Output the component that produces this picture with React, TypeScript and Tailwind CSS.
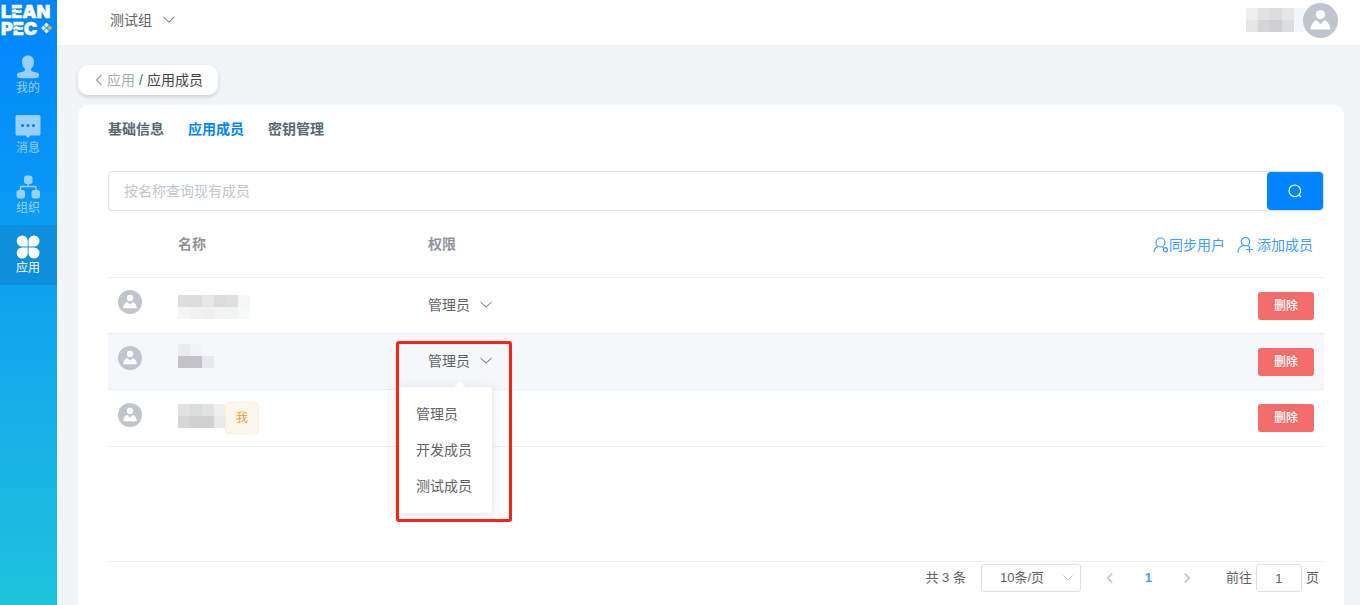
import { useState } from "react";
import type { ReactNode } from "react";
import clsx from "clsx";

type Member = {
    id: number;
    mask: string[][];
    maskClass: string;
    role: string;
    isMe?: boolean;
};

const roles = ["管理员", "开发成员", "测试成员"];

const members: Member[] = [
    {
        id: 1,
        mask: [
            ["#dcdddf", "#dcdddf", "#e7e7e7", "#dcdcdc", "#dee0df", "#f5f7f6"],
            ["#f5f5f5", "#f2f2f2", "#f0f0f0", "#f3f3f3", "#f2f4f3", "#f7f8f8"],
        ],
        maskClass: "mt-1",
        role: "管理员",
    },
    {
        id: 2,
        mask: [
            ["#ebecf0", "#f2f3f8", "#f5f7fb"],
            ["#c3c3c7", "#c3c3c7", "#e7e8ed"],
        ],
        maskClass: "mb-2.5",
        role: "管理员",
    },
    {
        id: 3,
        mask: [
            ["#e2e2e2", "#dbdcde", "#e1e3e2", "#f0eeee"],
            ["#d6d6d6", "#d1d1d1", "#d1d1d1", "#e9e9e9"],
        ],
        maskClass: "mb-1 -mr-px",
        role: "管理员",
        isMe: true,
    },
];

const userMask = [
    ["#eeeeed", "#e0e1e3", "#dcdcdd", "#e4e5e7", "#f5f6f7"],
    ["#e6e6e6", "#d4d5d7", "#d0cfd2", "#dcdddf", "#f5f6f7"],
];

function Logo() {
    return (
        <svg viewBox="0 0 57 45" className="h-[45px] w-full" role="img" aria-label="LEAN PEC">
            <g fill="#fff" stroke="#fff" strokeWidth=".5" fontFamily="Inter, sans-serif" fontWeight="900" fontSize="18">
                <text x="1" y="18">LEAN</text>
                <text x="1" y="35">PEC</text>
            </g>
            <g stroke="#0084ff" strokeWidth=".9" fill="none">
                <path d="M11 9.500q4-1.500 6 0t6-1M11 13.500q4-1.500 6 0t6-1" />
                <path d="M13 26.500q4-1.500 6 0t5-1M13 30.500q4-1.500 6 0t5-1" />
            </g>
            <path d="M46.500 22.500l2.500 2.500-2.500 2.500-2.500-2.500zM43.500 25.500l2.500 2.500-2.500 2.500-2.500-2.500zM46.500 28.500l2.500 2.500-2.500 2.500-2.500-2.500z" fill="#d9edff" />
            <path d="M49.700 25.300l2.500 2.600-2.500 2.600-2.500-2.600z" fill="#f0a73a" />
        </svg>
    );
}

const navItems: { label: string; icon: ReactNode }[] = [
    {
        label: "我的",
        icon: (
            <path d="M12 .5c3.600 0 6 2.600 6 6.500 0 2.900-1.200 5.300-2.800 6.700v1.500c0 .7.500 1.100 1.300 1.300l4.300 1.100c1.500.4 2.300 1.300 2.300 2.700 0 1.600-.8 2.500-2.500 2.600-5 .5-12.200.5-17.200 0C1.700 22.800.9 21.900.9 20.300c0-1.400.8-2.300 2.300-2.700l4.300-1.100c.8-.2 1.300-.6 1.300-1.300v-1.500C7.200 12.300 6 9.900 6 7 6 3.100 8.400.5 12 .5z" />
        ),
    },
    {
        label: "消息",
        icon: (
            <>
                <path d="M1 0h22a1.500 1.500 0 0 1 1.500 1.500v17.500a1.500 1.500 0 0 1-1.500 1.500h-8.500L12 23l-2.500-2.500H1A1.500 1.500 0 0 1-.5 19V1.500A1.500 1.500 0 0 1 1 0z" />
                <g fill="#0587fd">
                    <circle cx="6.500" cy="10.500" r="1.600" />
                    <circle cx="12" cy="10.500" r="1.600" />
                    <circle cx="17.500" cy="10.500" r="1.600" />
                </g>
            </>
        ),
    },
    {
        label: "组织",
        icon: (
            <>
                <rect x="8" y=".5" width="8.500" height="8.500" rx="2.500" />
                <rect x=".5" y="15" width="8.500" height="8.500" rx="2.500" />
                <rect x="15.500" y="15" width="8.500" height="8.500" rx="2.500" />
                <path d="M12.200 8v3.500M4.500 15.500v-3q0-1 1-1h13.500q1 0 1 1v3" fill="none" stroke="currentColor" strokeWidth="1.400" />
            </>
        ),
    },
    {
        label: "应用",
        icon: (
            <>
                <path d="M6.200.5a5.500 5.500 0 0 1 5.500 5.500v5.500H6.200a5.500 5.500 0 0 1 0-11z" />
                <path d="M18 .5a5.500 5.500 0 0 1 0 11h-5.500V6A5.500 5.500 0 0 1 18 .5z" />
                <path d="M6.200 12.500h5.500V18a5.500 5.500 0 1 1-5.500-5.500z" />
                <path d="M12.500 12.500H18a5.500 5.500 0 1 1-5.500 5.500z" />
            </>
        ),
    },
];

function Chevron({ className, dir = "down" }: { className?: string; dir?: "down" | "left" | "right" }) {
    const d = {
        down: "M1.500 4l5.500 5.200L12.500 4",
        left: "M9.500 2L4.500 7l5 5",
        right: "M4.500 2l5 5-5 5",
    }[dir];
    return (
        <svg viewBox="0 0 14 14" className={clsx("shrink-0", className)} fill="none" stroke="currentColor" aria-hidden="true">
            <path d={d} />
        </svg>
    );
}

function Avatar({ className }: { className: string }) {
    return (
        <svg viewBox="0 0 35 35" className={clsx("block shrink-0", className)} aria-hidden="true">
            <circle cx="17.500" cy="17.500" r="17.500" fill="#c0c4cc" />
            <circle cx="17.500" cy="11.500" r="4.600" fill="#fff" />
            <path d="M7.500 26.500c.5-4.500 2.500-8 6-9.300l4 4.300 4-4.300c3.500 1.300 5.500 4.800 6 9.300z" fill="#fff" />
        </svg>
    );
}

function Mosaic({ rows, className }: { rows: string[][]; className?: string }) {
    return (
        <div aria-hidden="true" className={clsx("shrink-0", className)}>
            {rows.map((row, i) => (
                <div key={i} className="flex">
                    {row.map((color, j) => (
                        <span key={j} className="size-3" style={{ backgroundColor: color }} />
                    ))}
                </div>
            ))}
        </div>
    );
}

function RoleCell({ role, open, onToggle, onPick }: { role: string; open: boolean; onToggle: () => void; onPick: (r: string) => void }) {
    return (
        <div className="relative inline-flex align-middle">
            <button type="button" className="flex h-5 items-center gap-[9px] text-[#606266]" aria-expanded={open} onClick={onToggle}>
                {role}
                <Chevron className="size-3.5" />
            </button>
            {open && (
                <>
                    <div className="absolute -left-8 top-[35px] z-10 w-[97px] rounded border border-[#ebeef5] bg-white py-[9px] shadow-[0_2px_12px_rgba(0,0,0,0.1)]">
                        <span className="absolute -top-1 left-[59px] size-2 rotate-45 bg-white" />
                        {roles.map((r) => (
                            <button key={r} type="button" className="block h-9 w-full px-[19px] text-left text-[#606266]" onClick={() => onPick(r)}>
                                {r}
                            </button>
                        ))}
                    </div>
                    <div className="pointer-events-none absolute -left-8 -top-2.5 z-20 h-[181px] w-[116px] rounded-[3px] border-3 border-[#fa2318]" />
                </>
            )}
        </div>
    );
}

export default function App() {
    const [list, setList] = useState(members);
    const [openId, setOpenId] = useState<number | null>(2);

    const pickRole = (id: number, role: string) => {
        setList(list.map((m) => (m.id === id ? { ...m, role } : m)));
        setOpenId(null);
    };

    return (
        <div className="flex min-h-screen bg-[#f1f5f8] font-['Liberation_Sans','Noto_Sans_CJK_SC',sans-serif] text-sm text-[#606266]">
            <aside className="w-[57px] shrink-0 bg-linear-to-b/srgb from-[#0084ff] to-[#1fc3dd]">
                <Logo />
                <nav>
                    {navItems.map((item) => (
                        <a
                            key={item.label}
                            href="#"
                            className={clsx(
                                "flex h-[60px] flex-col items-center gap-px pr-px pt-2.5 text-xs/4",
                                item.label === "应用" ? "bg-[#0f8fdb] text-white" : "text-[#99d0ff]"
                            )}
                        >
                            <svg viewBox="0 0 24 24" className="size-6 overflow-visible" fill="currentColor" aria-hidden="true">
                                {item.icon}
                            </svg>
                            {item.label}
                        </a>
                    ))}
                </nav>
            </aside>

            <div className="flex min-w-0 flex-1 flex-col">
                <header className="flex h-[45px] items-center justify-between bg-white pb-[5px] pl-[53px] pr-[22px]">
                    <button type="button" className="flex items-center gap-2.5">
                        测试组
                        <Chevron className="size-3.5" />
                    </button>
                    <div className="flex items-center">
                        <Mosaic rows={userMask} className="-mr-[3px]" />
                        <Avatar className="size-[35px]" />
                    </div>
                </header>

                <main className="flex flex-1 flex-col pl-[21px] pr-4 pt-5">
                    <div className="mb-2.5 flex h-[30px] items-center self-start rounded-[10px] bg-white pl-3.5 pr-[15px] shadow-[0_2px_4px_rgba(0,0,0,0.15)]">
                        <Chevron dir="left" className="mr-px size-3.5" />
                        <a href="#" className="text-[#a5adb8]">应用</a>
                        <span className="px-1">/</span>
                        <span className="text-[#404248]">应用成员</span>
                    </div>

                    <section className="flex flex-1 flex-col rounded-t-[10px] bg-white pb-[13px] pl-[30px] pr-5 pt-3.5">
                        <nav className="mb-8 flex gap-6 font-bold text-[#5a6670]">
                            <a href="#">基础信息</a>
                            <a href="#" className="text-[#0084ff]">应用成员</a>
                            <a href="#">密钥管理</a>
                        </nav>

                        <form className="flex h-10 rounded border border-[#dcdfe6]" onSubmit={(e) => e.preventDefault()}>
                            <input
                                type="text"
                                aria-label="按名称查询现有成员"
                                placeholder="按名称查询现有成员"
                                className="min-w-0 flex-1 px-[15px] outline-none placeholder:text-[#c0c4cc]"
                            />
                            <button type="submit" aria-label="搜索" className="flex w-14 items-center justify-center rounded bg-[#0084ff] text-white">
                                <svg viewBox="0 0 14 14" className="size-3.5" fill="none" stroke="currentColor" strokeWidth="1.200" aria-hidden="true">
                                    <circle cx="6.800" cy="6.800" r="5.800" />
                                    <path d="M10.800 10.800l2.200 2.200" />
                                </svg>
                            </button>
                        </form>

                        <table className="w-full table-fixed border-collapse text-left">
                            <colgroup>
                                <col className="w-[60px]" />
                                <col className="w-[250px]" />
                                <col />
                                <col className="w-[250px]" />
                            </colgroup>
                            <thead>
                                <tr className="h-[66px] border-b border-[#ebeef5] text-[#909399]">
                                    <th aria-label="头像" />
                                    <th className="px-2.5">名称</th>
                                    <th className="px-2.5">权限</th>
                                    <th className="pr-[11px] pt-0.5 font-normal">
                                        <div className="flex justify-end gap-3 text-[#409eff]">
                                            <button type="button" className="flex items-center">
                                                <svg viewBox="0 0 16 16" className="size-4" fill="none" stroke="currentColor" strokeWidth="1.200" aria-hidden="true">
                                                    <circle cx="7.500" cy="5.500" r="4.500" />
                                                    <path d="M1 15c.3-3 1.800-4.800 4.500-5.500M9 9.700l1.500.8" />
                                                    <circle cx="12.500" cy="12.800" r="2.100" />
                                                </svg>
                                                同步用户
                                            </button>
                                            <button type="button" className="flex items-center gap-1">
                                                <svg viewBox="0 0 16 16" className="size-4" fill="none" stroke="currentColor" strokeWidth="1.200" aria-hidden="true">
                                                    <circle cx="8.500" cy="4.700" r="4.200" />
                                                    <path d="M1 15.500c0-3.700 2-6 5.500-7M10.500 8.500l1.500 1M9 12.500h7M12.500 9.200v6.500" />
                                                </svg>
                                                添加成员
                                            </button>
                                        </div>
                                    </th>
                                </tr>
                            </thead>
                            <tbody>
                                {list.map((m) => (
                                    <tr key={m.id} className={clsx("h-14 border-b border-[#ebeef5] last:h-[57px]", openId === m.id && "bg-[#f5f7fb]")}>
                                        <td className="px-2.5 pb-1.5">
                                            <Avatar className="size-6" />
                                        </td>
                                        <td className="px-2.5">
                                            <div className="flex items-center">
                                                <Mosaic rows={m.mask} className={m.maskClass} />
                                                {m.isMe && (
                                                    <span className="flex h-8 w-[34px] items-center justify-center rounded border border-[#faecd8] bg-[#fdf6ec] text-xs text-[#e6a23c]">
                                                        我
                                                    </span>
                                                )}
                                            </div>
                                        </td>
                                        <td className="px-2.5 pb-0.5">
                                            {/* own role can't be changed from here */}
                                            {!m.isMe && (
                                                <RoleCell
                                                    role={m.role}
                                                    open={openId === m.id}
                                                    onToggle={() => setOpenId(openId === m.id ? null : m.id)}
                                                    onPick={(r) => pickRole(m.id, r)}
                                                />
                                            )}
                                        </td>
                                        <td className="px-2.5 pt-px text-right">
                                            <button
                                                type="button"
                                                className="h-7 w-14 rounded-[3px] bg-[#f56c6c] align-middle text-xs font-medium text-white"
                                                onClick={() => setList(list.filter((x) => x.id !== m.id))}
                                            >
                                                删除
                                            </button>
                                        </td>
                                    </tr>
                                ))}
                            </tbody>
                        </table>

                        <footer className="mt-auto flex items-center justify-end border-t border-[#ebeef5] pr-[5px] pt-0.5 text-[13px]">
                            <span className="mr-[15px]">共 3 条</span>
                            <div className="relative">
                                <select aria-label="每页条数" className="h-7 w-[100px] appearance-none rounded-[3px] border border-[#dcdfe6] bg-white pl-[18px] pr-6">
                                    <option>10条/页</option>
                                    <option>20条/页</option>
                                    <option>50条/页</option>
                                </select>
                                <Chevron className="pointer-events-none absolute right-[7px] top-2 size-3 text-[#c0c4cc]" />
                            </div>
                            <div className="ml-2.5 flex text-[#c0c4cc]">
                                <button type="button" aria-label="上一页" className="flex h-7 w-[38px] items-center justify-center">
                                    <Chevron dir="left" className="size-3 stroke-2" />
                                </button>
                                <button type="button" className="h-7 w-[39px] font-bold text-[#409eff]">1</button>
                                <button type="button" aria-label="下一页" className="flex h-7 w-[38px] items-center justify-center">
                                    <Chevron dir="right" className="size-3 stroke-2" />
                                </button>
                            </div>
                            <label className="ml-5 flex items-center gap-1">
                                前往
                                <input type="text" defaultValue="1" className="h-7 w-[46px] rounded-[3px] border border-[#dcdfe6] text-center outline-none" />
                                页
                            </label>
                        </footer>
                    </section>
                </main>
            </div>
        </div>
    );
}
